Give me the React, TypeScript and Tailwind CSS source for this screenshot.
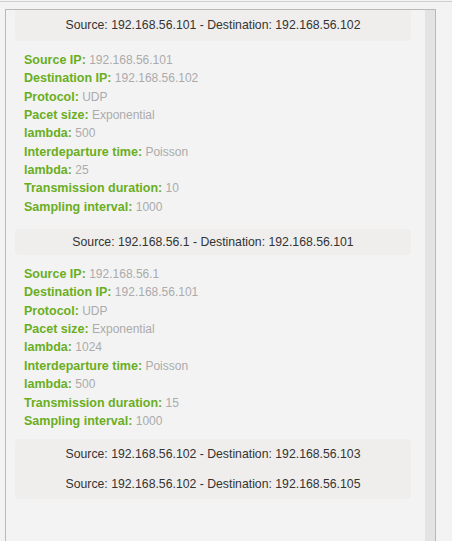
import React from "react";

type Row = [string, string];

const list1: Row[] = [
  ["Source IP:", "192.168.56.101"],
  ["Destination IP:", "192.168.56.102"],
  ["Protocol:", "UDP"],
  ["Pacet size:", "Exponential"],
  ["lambda:", "500"],
  ["Interdeparture time:", "Poisson"],
  ["lambda:", "25"],
  ["Transmission duration:", "10"],
  ["Sampling interval:", "1000"],
];

const list2: Row[] = [
  ["Source IP:", "192.168.56.1"],
  ["Destination IP:", "192.168.56.101"],
  ["Protocol:", "UDP"],
  ["Pacet size:", "Exponential"],
  ["lambda:", "1024"],
  ["Interdeparture time:", "Poisson"],
  ["lambda:", "500"],
  ["Transmission duration:", "15"],
  ["Sampling interval:", "1000"],
];

function Details({ rows }: { rows: Row[] }) {
  return (
    <div className="mt-[10px] pl-[9px] text-[12px] leading-[18.35px]">
      {rows.map(([k, v], i) => (
        <div key={i} className="whitespace-nowrap">
          <span className="font-bold text-[12.5px] text-[#6aae1f]">{k}</span>{" "}
          <span className="text-[#ababab]">{v}</span>
        </div>
      ))}
    </div>
  );
}

export default function App() {
  return (
    <div
      className="min-h-[541px] bg-[#f3f3f3] pt-px overflow-hidden"
      style={{ fontFamily: '"Liberation Sans", Arial, sans-serif' }}
    >
      <div className="h-px bg-[#cfcfcf]" />
      <div className="mt-[7px] ml-[5px] w-[431px] h-[540px] border-l border-t border-r border-[#b9b9b9] flex">
        <div className="flex-1 pl-[9px] pr-[14px]">
          <div className="h-[31px] bg-[#efeeed] rounded-b-[4px] flex items-center justify-center text-[12.25px] text-[#333]">
            Source: 192.168.56.101 - Destination: 192.168.56.102
          </div>
          <Details rows={list1} />
          <div className="mt-[13px] h-[26px] bg-[#efeeed] rounded-[4px] flex items-center justify-center text-[12.25px] text-[#333]">
            Source: 192.168.56.1 - Destination: 192.168.56.101
          </div>
          <Details rows={list2} />
          <div className="mt-[9px] bg-[#efeeed] rounded-[4px] text-[12.25px] text-[#333]">
            <div className="h-[30px] flex items-center justify-center">
              Source: 192.168.56.102 - Destination: 192.168.56.103
            </div>
            <div className="h-[30px] flex items-center justify-center">
              Source: 192.168.56.102 - Destination: 192.168.56.105
            </div>
          </div>
        </div>
        <div className="w-[10px] bg-[#e3e3e3]" />
      </div>
    </div>
  );
}
